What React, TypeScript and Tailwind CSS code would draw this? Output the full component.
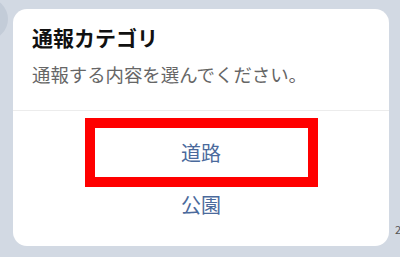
import * as React from "react";

const jp = { fontFamily: '"Noto Sans CJK JP", "Noto Sans", sans-serif' };

const options = ["道路", "公園"];

export default function App() {
  return (
    <div className="relative h-[257px] w-[400px] overflow-hidden bg-[#d2d9e3]" style={jp}>
      {/* chat avatar peeking behind the sheet */}
      <div className="absolute left-[-34px] top-[-2px] h-[42px] w-[42px] rounded-full bg-[#c3ccd8]" />
      <span className="absolute left-[395px] top-[222px] text-[11px] leading-[14px] text-[#555]">2</span>

      <div className="relative ml-[13px] mt-[9px] flex h-[237px] w-[376px] flex-col rounded-[14px] bg-white">
        <div className="px-[19px] pb-[23px] pt-[14px]">
          <h2 className="text-[21px] font-bold leading-[28px] text-[#111]">通報カテゴリ</h2>
          <p className="mt-[10px] text-[18.4px] leading-[26px] text-[#666]">通報する内容を選んでください。</p>
        </div>
        <div className="h-px bg-[#ececec]" />
        <div className="flex flex-col items-center pt-[7px]">
          <button className="flex h-[69px] w-[233px] items-center justify-center border-[10px] border-[#ff0000] text-[20px] leading-[28px] text-[#4b6a9c]">
            {options[0]}
          </button>
          <button className="flex h-[36px] w-full items-center justify-center text-[20px] leading-[28px] text-[#4b6a9c]">
            {options[1]}
          </button>
        </div>
      </div>
    </div>
  );
}
